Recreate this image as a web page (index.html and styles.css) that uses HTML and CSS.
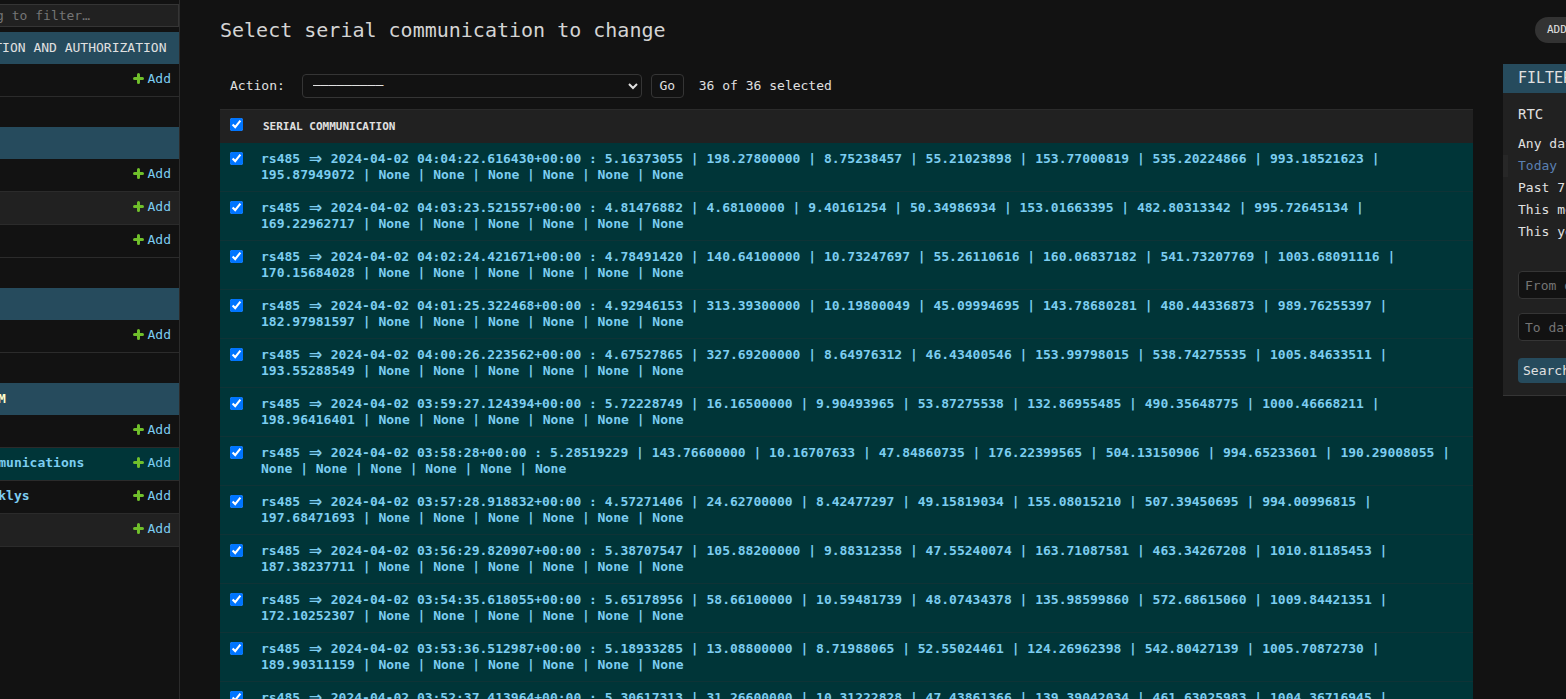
FILE: index.html
```html
<!DOCTYPE html>
<html lang="en">
<head>
<meta charset="utf-8">
<title>Select serial communication to change</title>
<link rel="stylesheet" href="styles.css">
</head>
<body>
<svg class="defs" aria-hidden="true"><symbol id="plus" viewBox="0 0 11 11"><path d="M5.500 1.500V9.500M1.500 5.500H9.500" fill="none" stroke="#70bf2b" stroke-width="3" stroke-linecap="round"/></symbol></svg>
<div class="page">
  <nav class="sidebar">
    <div class="nav-inner">
      <input class="nav-filter" type="search" placeholder="Start typing to filter…" aria-label="Filter navigation items">
      <section class="module">
        <h2>AUTHENTICATION AND AUTHORIZATION</h2>
        <div class="model"><a class="add" href="#"><svg><use href="#plus"/></svg>Add</a></div>
      </section>
      <section class="module">
        <h2></h2>
        <div class="model"><a class="add" href="#"><svg><use href="#plus"/></svg>Add</a></div>
        <div class="model alt"><a class="add" href="#"><svg><use href="#plus"/></svg>Add</a></div>
        <div class="model"><a class="add" href="#"><svg><use href="#plus"/></svg>Add</a></div>
      </section>
      <section class="module">
        <h2></h2>
        <div class="model"><a class="add" href="#"><svg><use href="#plus"/></svg>Add</a></div>
      </section>
      <section class="module">
        <h2 class="current-app">RS485 SYSTEM</h2>
        <div class="model"><a class="add" href="#"><svg><use href="#plus"/></svg>Add</a></div>
        <div class="model current"><a class="name" href="#">Serial communications</a><a class="add" href="#"><svg><use href="#plus"/></svg>Add</a></div>
        <div class="model"><a class="name" href="#">Serial weeklys</a><a class="add" href="#"><svg><use href="#plus"/></svg>Add</a></div>
        <div class="model alt"><a class="add" href="#"><svg><use href="#plus"/></svg>Add</a></div>
      </section>
    </div>
  </nav>
  <main class="content">
    <header class="title-row">
      <h1>Select serial communication to change</h1>
      <div class="tools"><a class="add-button" href="#">ADD SERIAL COMMUNICATION +</a></div>
    </header>
    <div class="columns">
      <form class="changelist">
        <div class="actions">
          <label for="action">Action:</label>
          <select id="action"><option>─────────</option></select>
          <button type="button">Go</button>
          <span class="counter">36 of 36 selected</span>
        </div>
        <table class="results">
          <thead><tr><th class="check"><input type="checkbox" checked aria-label="Select all"></th><th>SERIAL COMMUNICATION</th></tr></thead>
          <tbody>
            <tr><td class="check"><input type="checkbox" checked aria-label="Select row 1"></td><td><a href="#">rs485 <span class="arrow">⇒</span> 2024-04-02 04:04:22.616430+00:00 : 5.16373055 | 198.27800000 | 8.75238457 | 55.21023898 | 153.77000819 | 535.20224866 | 993.18521623 | 195.87949072 | None | None | None | None | None | None</a></td></tr>
            <tr><td class="check"><input type="checkbox" checked aria-label="Select row 2"></td><td><a href="#">rs485 <span class="arrow">⇒</span> 2024-04-02 04:03:23.521557+00:00 : 4.81476882 | 4.68100000 | 9.40161254 | 50.34986934 | 153.01663395 | 482.80313342 | 995.72645134 | 169.22962717 | None | None | None | None | None | None</a></td></tr>
            <tr><td class="check"><input type="checkbox" checked aria-label="Select row 3"></td><td><a href="#">rs485 <span class="arrow">⇒</span> 2024-04-02 04:02:24.421671+00:00 : 4.78491420 | 140.64100000 | 10.73247697 | 55.26110616 | 160.06837182 | 541.73207769 | 1003.68091116 | 170.15684028 | None | None | None | None | None | None</a></td></tr>
            <tr><td class="check"><input type="checkbox" checked aria-label="Select row 4"></td><td><a href="#">rs485 <span class="arrow">⇒</span> 2024-04-02 04:01:25.322468+00:00 : 4.92946153 | 313.39300000 | 10.19800049 | 45.09994695 | 143.78680281 | 480.44336873 | 989.76255397 | 182.97981597 | None | None | None | None | None | None</a></td></tr>
            <tr><td class="check"><input type="checkbox" checked aria-label="Select row 5"></td><td><a href="#">rs485 <span class="arrow">⇒</span> 2024-04-02 04:00:26.223562+00:00 : 4.67527865 | 327.69200000 | 8.64976312 | 46.43400546 | 153.99798015 | 538.74275535 | 1005.84633511 | 193.55288549 | None | None | None | None | None | None</a></td></tr>
            <tr><td class="check"><input type="checkbox" checked aria-label="Select row 6"></td><td><a href="#">rs485 <span class="arrow">⇒</span> 2024-04-02 03:59:27.124394+00:00 : 5.72228749 | 16.16500000 | 9.90493965 | 53.87275538 | 132.86955485 | 490.35648775 | 1000.46668211 | 198.96416401 | None | None | None | None | None | None</a></td></tr>
            <tr><td class="check"><input type="checkbox" checked aria-label="Select row 7"></td><td><a href="#">rs485 <span class="arrow">⇒</span> 2024-04-02 03:58:28+00:00 : 5.28519229 | 143.76600000 | 10.16707633 | 47.84860735 | 176.22399565 | 504.13150906 | 994.65233601 | 190.29008055 | None | None | None | None | None | None</a></td></tr>
            <tr><td class="check"><input type="checkbox" checked aria-label="Select row 8"></td><td><a href="#">rs485 <span class="arrow">⇒</span> 2024-04-02 03:57:28.918832+00:00 : 4.57271406 | 24.62700000 | 8.42477297 | 49.15819034 | 155.08015210 | 507.39450695 | 994.00996815 | 197.68471693 | None | None | None | None | None | None</a></td></tr>
            <tr><td class="check"><input type="checkbox" checked aria-label="Select row 9"></td><td><a href="#">rs485 <span class="arrow">⇒</span> 2024-04-02 03:56:29.820907+00:00 : 5.38707547 | 105.88200000 | 9.88312358 | 47.55240074 | 163.71087581 | 463.34267208 | 1010.81185453 | 187.38237711 | None | None | None | None | None | None</a></td></tr>
            <tr><td class="check"><input type="checkbox" checked aria-label="Select row 10"></td><td><a href="#">rs485 <span class="arrow">⇒</span> 2024-04-02 03:54:35.618055+00:00 : 5.65178956 | 58.66100000 | 10.59481739 | 48.07434378 | 135.98599860 | 572.68615060 | 1009.84421351 | 172.10252307 | None | None | None | None | None | None</a></td></tr>
            <tr><td class="check"><input type="checkbox" checked aria-label="Select row 11"></td><td><a href="#">rs485 <span class="arrow">⇒</span> 2024-04-02 03:53:36.512987+00:00 : 5.18933285 | 13.08800000 | 8.71988065 | 52.55024461 | 124.26962398 | 542.80427139 | 1005.70872730 | 189.90311159 | None | None | None | None | None | None</a></td></tr>
            <tr><td class="check"><input type="checkbox" checked aria-label="Select row 12"></td><td><a href="#">rs485 <span class="arrow">⇒</span> 2024-04-02 03:52:37.413964+00:00 : 5.30617313 | 31.26600000 | 10.31222828 | 47.43861366 | 139.39042034 | 461.63025983 | 1004.36716945 |</a></td></tr>
          </tbody>
        </table>
      </form>
      <aside class="rail">
        <div class="filters">
          <h2>FILTER</h2>
          <h3>RTC</h3>
          <ul>
            <li><a href="#">Any date</a></li>
            <li class="selected"><a href="#">Today</a></li>
            <li><a href="#">Past 7 days</a></li>
            <li><a href="#">This month</a></li>
            <li><a href="#">This year</a></li>
          </ul>
          <form class="range">
            <input type="text" placeholder="From date" aria-label="From date">
            <input type="text" placeholder="To date" aria-label="To date">
            <button type="button">Search</button>
          </form>
        </div>
      </aside>
    </div>
  </main>
</div>
</body>
</html>
```
FILE: styles.css
```css
* { box-sizing: border-box; }
body {
  margin: 0;
  background: #121212;
  color: #e0e0e0;
  font: 13px/16px "DejaVu Sans Mono", monospace;
}
a { color: #7ccdf0; text-decoration: none; }
h1, h2, h3, ul { margin: 0; padding: 0; font-weight: 400; }
input, select, button { font: inherit; color: inherit; }
.defs { position: absolute; width: 0; height: 0; }
.page { display: flex; height: 100vh; overflow: hidden; }

/* Navigation */
.sidebar {
  flex: none;
  display: flex;
  justify-content: flex-end;
  width: 180px;
  overflow: hidden;
  border-right: 1px solid #2b2b2b;
}
.nav-inner { flex: none; width: 275px; padding-top: 4px; }
.nav-filter {
  display: block;
  width: 100%;
  height: 23px;
  margin-bottom: 5px;
  padding: 0 5px;
  border: 1px solid #353535;
  background: #212121;
}
::placeholder { color: #757575; opacity: 1; }
.module { margin-bottom: 30px; }
.module h2 {
  height: 32px;
  padding: 8px 12px;
  background: #264b5d;
  font-size: 13px;
  white-space: nowrap;
}
.module .current-app { padding: 8px; color: #ffffcc; font-weight: 700; }
.model {
  display: flex;
  align-items: center;
  height: 33px;
  padding: 0 8px 3px 16px;
  border-bottom: 1px solid #2b2b2b;
}
.model.alt { background: #212121; }
.model.current { background: #003538; }
.model .name { font-weight: 700; }
.add { display: flex; align-items: center; gap: 4px; margin-left: auto; }
.add svg { width: 11px; height: 11px; }

/* Main area */
.content { flex: 1; min-width: 0; padding-left: 40px; }
.title-row, .columns {
  display: grid;
  grid-template-columns: minmax(0, 1fr) 63px;
  column-gap: 30px;
  align-items: start;
}
.title-row { height: 64px; padding-top: 17px; }
h1 { font-size: 20px; line-height: 26px; color: #d4d4d4; }
.tools { padding-left: 32px; overflow: hidden; }
.add-button {
  display: inline-block;
  padding: 5px 12px;
  border-radius: 13px;
  background: #333;
  color: #e0e0e0;
  font-size: 11px;
  white-space: nowrap;
}
.actions { display: flex; align-items: center; height: 45px; padding: 0 10px 2px; }
.actions select {
  width: 340px;
  height: 24px;
  margin: 0 9px 0 17px;
  padding: 0 6px;
  border: 1px solid #353535;
  border-radius: 4px;
  background: #121212;
}
.actions button {
  width: 33px;
  height: 24px;
  padding: 0;
  border: 1px solid #353535;
  border-radius: 4px;
  background: #121212;
}
.counter { margin-left: 15px; }
.results { width: 100%; border-collapse: separate; border-spacing: 0; }
.results th, .results td { text-align: left; vertical-align: top; }
.results th {
  height: 34px;
  padding: 9px 10px 8px;
  border-top: 1px solid #2b2b2b;
  background: #212121;
  font-size: 11px;
}
.results td {
  height: 49px;
  padding: 8px 16px 8px 8px;
  border-bottom: 1px solid #0f3336;
  background: #003538;
  font-weight: 700;
}
.results .check { width: 33px; padding: 9px 0 0 10px; }
.results th.check { padding-top: 8px; }
.check input { display: block; width: 13px; height: 13px; margin: 0; }
.arrow {
  display: inline-block;
  width: 15px;
  height: 16px;
  vertical-align: top;
  text-align: center;
  font-family: "DejaVu Sans", sans-serif;
  font-size: 16px;
}

/* Filter panel */
.rail { overflow: hidden; }
.filters {
  width: 240px;
  padding-bottom: 12px;
  border-bottom: 1px solid #353535;
  background: #212121;
}
.filters h2 { padding: 6px 15px 7px; background: #264b5d; font-size: 15px; }
.filters h3 { padding: 13px 15px 11px; font-size: 14px; }
.filters ul { list-style: none; }
.filters li { padding: 3px 10px 3px 15px; }
.filters li a { color: #e0e0e0; }
.filters .selected { padding-left: 10px; border-left: 5px solid #272727; }
.filters .selected a { color: #5b80b2; }
.range {
  display: flex;
  flex-direction: column;
  align-items: flex-start;
  gap: 14px;
  padding: 28px 15px 0;
}
.range input {
  width: 200px;
  height: 28px;
  padding: 0 6px;
  border: 1px solid #353535;
  border-radius: 4px;
  background: #121212;
}
.range button {
  height: 25px;
  margin-top: 3px;
  padding: 0 5px;
  border: 0;
  border-radius: 4px;
  background: #264b5d;
}
```
